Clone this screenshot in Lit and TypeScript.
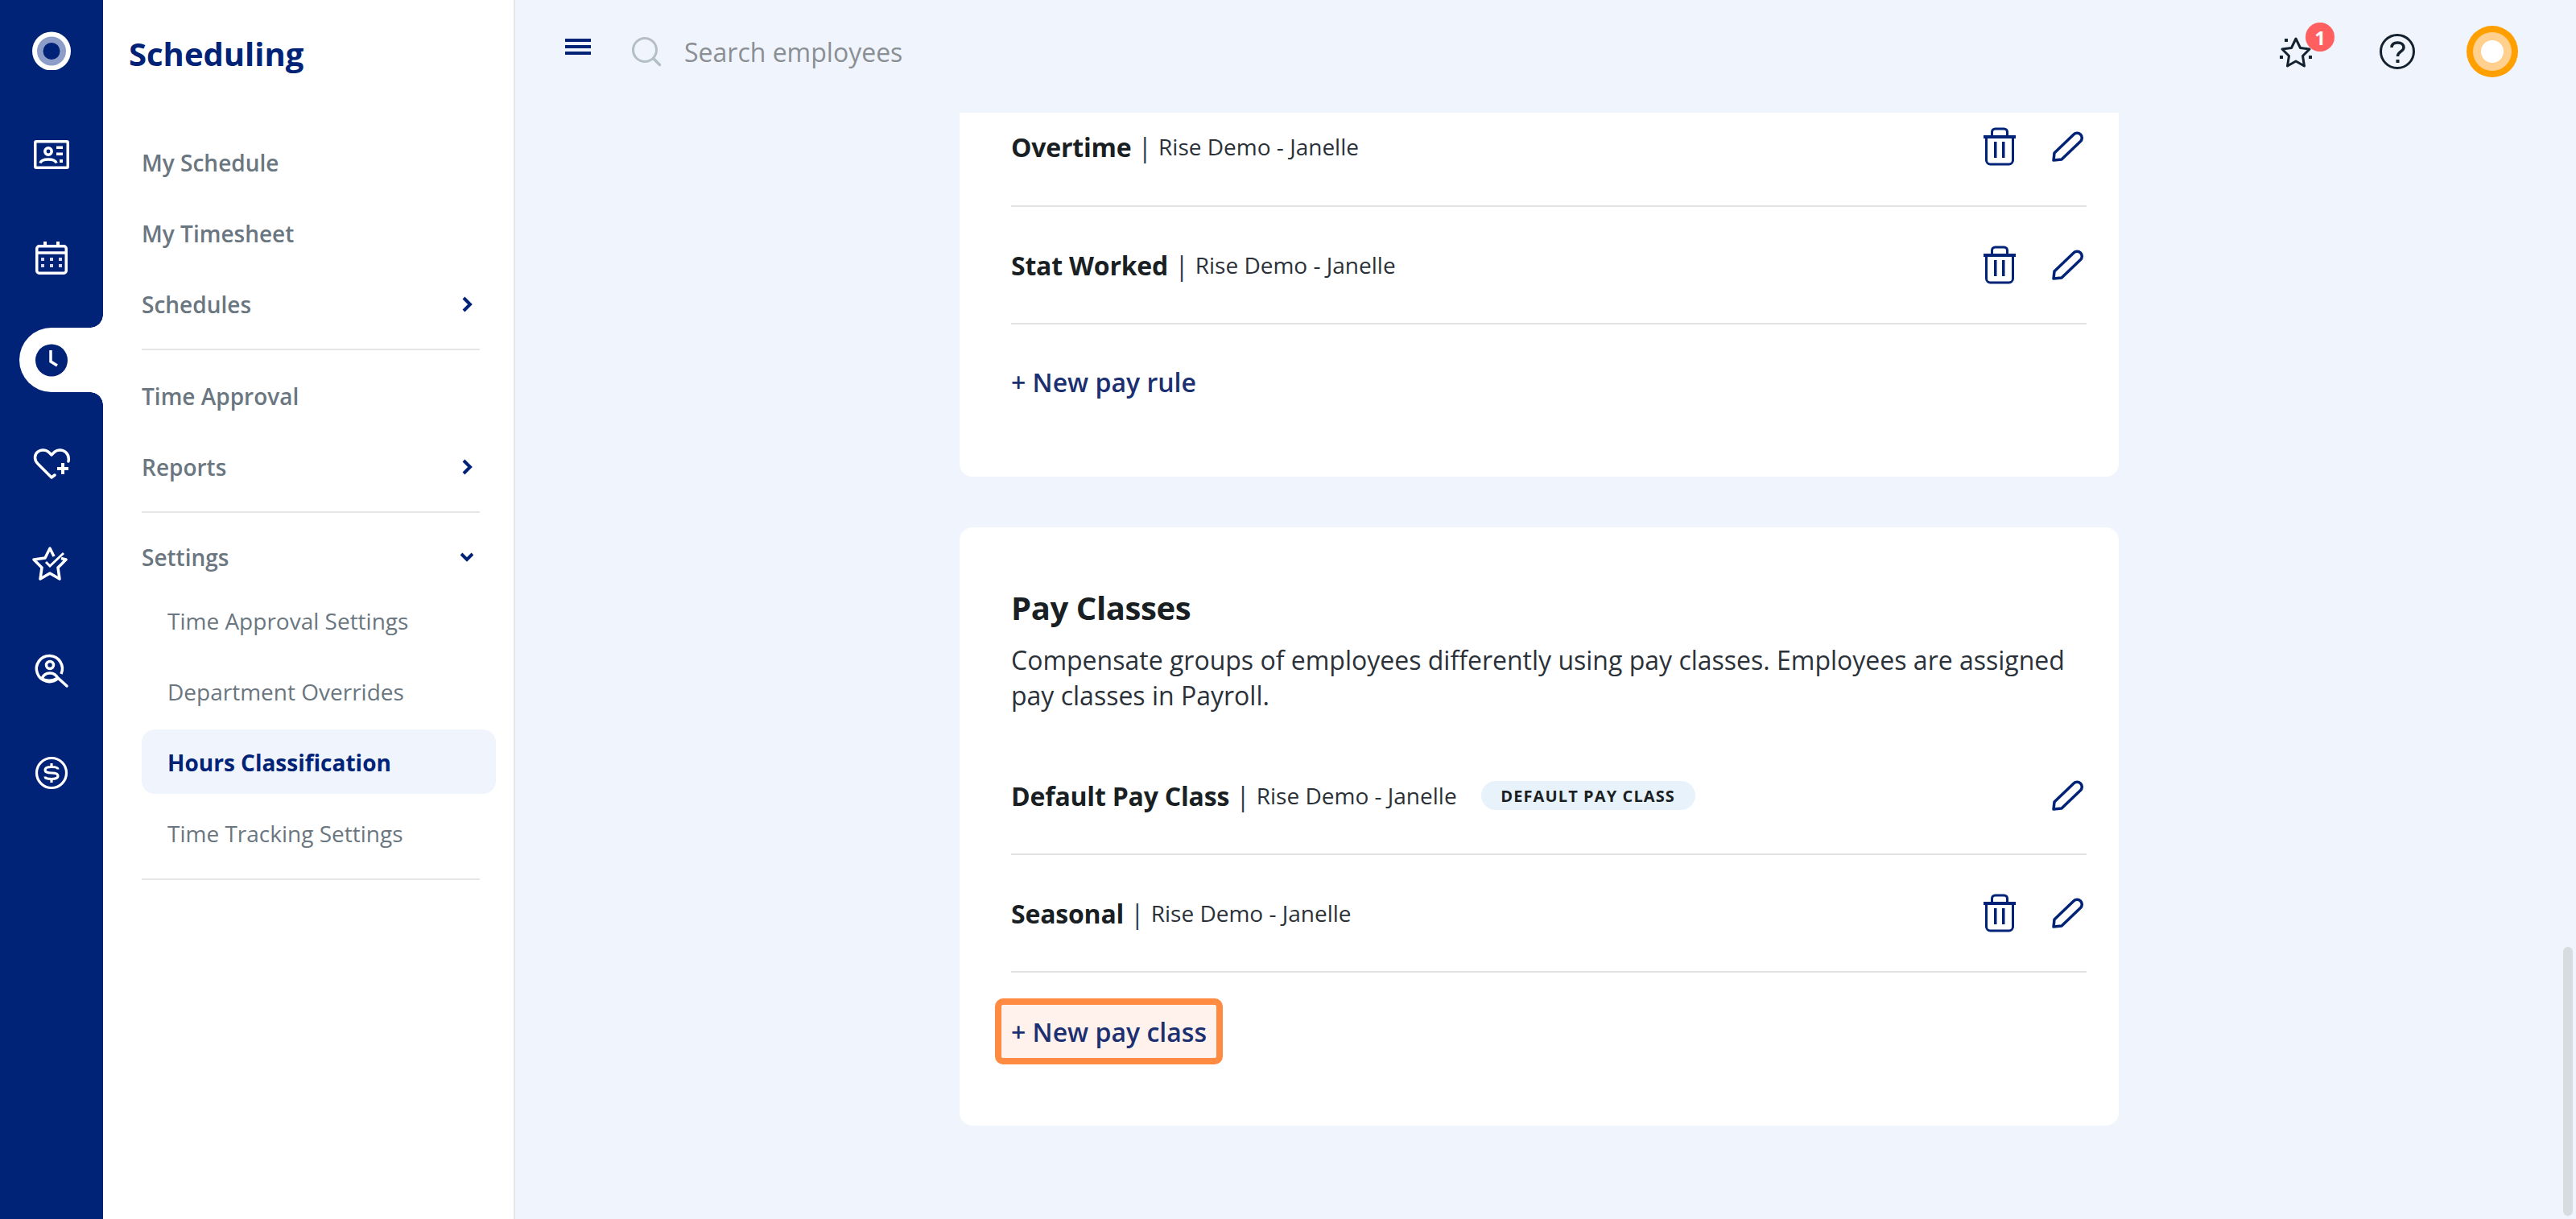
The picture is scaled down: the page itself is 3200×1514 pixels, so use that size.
import { LitElement, html, css, svg } from "lit";
import { customElement } from "lit/decorators.js";

const railIcons = [
  svg`<circle cx="24" cy="24.500" r="24" fill="#fff"/><circle cx="24" cy="24.500" r="18" fill="#8c9dc8"/><circle cx="24" cy="24.500" r="10.500" fill="#002377"/>`,
  svg`<g fill="none" stroke="#fff" stroke-width="3.500"><rect x="3.750" y="8.750" width="40.500" height="32.500" rx="1.500"/><circle cx="20" cy="21" r="4.200"/><path d="M10 35.500c1-3.500 5-4.500 10-4.500s9 1 10 4.500"/></g><path d="M30 14.500h8v3.500h-8zM30 22.500h8v3.500h-8zM34 31h4v4h-4z" fill="#fff"/>`,
  svg`<g fill="none" stroke="#fff" stroke-width="3.500"><rect x="5.750" y="10.750" width="36.500" height="33.500" rx="3"/><path d="M6 19h36"/></g><path d="M14 5h4v5h-4zM30 5h4v5h-4z" fill="#fff"/><path d="M11 25h4v4h-4zM22 25h4v4h-4zM33 25h4v4h-4zM11 33h4v4h-4zM22 33h4v4h-4zM33 33h4v4h-4z" fill="#d3d9ea"/>`,
  svg`<circle cx="24" cy="24.500" r="20" fill="#002377"/><path d="M23 12v14l8 5" fill="none" stroke="#fff" stroke-width="3.500"/>`,
  svg`<path d="M28 39l-4 3L7 25C2 20 3 14 6 11c4-4 11-4 15 0l3 3 3-3c4-4 11-4 15 0 3 3 4 6 3 11" fill="none" stroke="#fff" stroke-width="3.500" stroke-linecap="round" stroke-linejoin="round"/><path d="M38 24v14M31 31h14" stroke="#fff" stroke-width="4"/>`,
  svg`<path d="M27 12 22 2l-6 12-14 2 10 10-2 14 12-7 12 7-2-14 10-10-6-1.500" fill="none" stroke="#fff" stroke-width="3.500" stroke-linejoin="round"/><path d="M17 19l5 5 17-16" fill="none" stroke="#fff" stroke-width="3"/>`,
  svg`<g fill="none" stroke="#fff" stroke-width="3.500"><path d="M32 35.500A16 16 0 1 1 36 30"/><circle cx="22" cy="19" r="4.500"/><path d="M12 36c2-5 6-7 10-7s8 2 10 7"/><path d="M12 36c4 3 14 3 20-1"/></g><path d="M32 35l11 10" fill="none" stroke="#fff" stroke-width="3.500" stroke-linecap="round"/>`,
  svg`<g fill="none" stroke="#fff" stroke-width="3.200"><circle cx="24" cy="25" r="18.500"/><path d="M32 20.500c0-2-3-3-8-3s-8 1.500-8 3.750 3 3.750 8 3.750 8 1.500 8 3.750-3 3.750-8 3.750-8-1-8-3M24 13v4.500M24 32.500V37"/></g>`,
];

const trash = svg`<g fill="none" stroke="#002377" stroke-width="3"><path d="M10.500 10V6a4 4 0 0 1 4-4h11a4 4 0 0 1 4 4v4"/><path d="M3.500 14v27a5 5 0 0 0 5 5h23a5 5 0 0 0 5-5V14"/></g><path d="M0 10h40v4H0zM13 18h3.500v20H13zM23 18h3.500v20H23z" fill="#002377"/>`;
const pencil = svg`<path d="M3 37 4 28 28 5a6 6 0 0 1 8.500 8.500L13 36z" fill="none" stroke="#002377" stroke-width="3.500" stroke-linejoin="round"/>`;

@customElement("app-root")
export class AppRoot extends LitElement {
  static styles = css`
    :host { display: block; width: 3200px; height: 1514px; font-family: "Open Sans", "Noto Sans", sans-serif; background: #f0f4fc; }
    * { box-sizing: border-box; }
    .page { display: flex; height: 1514px; overflow: hidden; position: relative; }
    .rail { width: 128px; flex: none; background: #002377; display: flex; flex-direction: column; gap: 48px; padding-top: 23px; }
    .rail-item { height: 80px; display: flex; align-items: center; justify-content: center; position: relative; }
    .rail-item svg { width: 48px; height: 48px; }
    .rail-item.active { background: #fff; margin-left: 24px; border-radius: 40px 0 0 40px; padding-right: 24px; }
    .rail-item.active::before, .rail-item.active::after { content: ""; position: absolute; right: 0; width: 16px; height: 16px; }
    .rail-item.active::before { top: -16px; background: radial-gradient(circle at 0 0, transparent 15.500px, #fff 16px); }
    .rail-item.active::after { bottom: -16px; background: radial-gradient(circle at 0 100%, transparent 15.500px, #fff 16px); }
    .side { width: 512px; flex: none; background: #fff; border-right: 2px solid #e3e6ea; padding-left: 48px; }
    .title { height: 136px; display: flex; align-items: center; margin-left: -16px; color: #002377; font-size: 40px; font-weight: 700; padding-bottom: 4px; }
    .nav { width: 420px; padding-top: 22px; }
    .nav-item { height: 88px; display: flex; align-items: center; justify-content: space-between; padding-right: 8px; font-size: 28px; font-weight: 600; color: #6a7680; }
    .nav-item.settings { height: 80px; margin-top: 2px; padding-top: 3px; }
    .nav-item svg { width: 16px; height: 20px; }
    .divider { height: 2px; background: #e6e6e6; margin: 11px 0 13px; }
    .subs { display: flex; flex-direction: column; gap: 8px; width: 440px; }
    .sub { height: 80px; display: flex; align-items: center; padding-left: 32px; font-size: 28px; color: #6a7680; border-radius: 16px; padding-top: 2px; }
    .sub.active { background: #f0f4fc; color: #002377; font-weight: 700; }
    .subs + .divider { margin-top: 17px; }
    .main { flex: 1; display: flex; flex-direction: column; padding-right: 16px; min-width: 0; }
    .top { height: 140px; flex: none; display: flex; align-items: center; position: relative; padding: 0 56px 12px 62px; }
    .burger { width: 32px; height: 20px; margin-top: -12px; }
    .search { width: 38px; height: 38px; margin-left: 50px; }
    .ph { margin-left: 28px; font-size: 32px; color: #8a8f94; }
    .spacer { flex: 1; }
    .star { position: relative; width: 40px; height: 40px; margin-top: 2px; }
    .star svg { width: 40px; height: 40px; display: block; }
    .badge { position: absolute; left: 32px; top: -17px; width: 36px; height: 36px; border-radius: 50%; background: #ff5f5f; color: #fff; font-size: 24px; font-weight: 700; display: flex; align-items: center; justify-content: center; }
    .help { width: 46px; height: 46px; margin-left: 83px; }
    .avatar { width: 64px; height: 64px; margin-left: 63px; }
    .content { width: 1440px; margin: 0 auto; display: flex; flex-direction: column; gap: 63px; }
    .card { background: #fff; padding: 0 40px 0 64px; border-radius: 16px; }
    .card.first { border-radius: 0 0 16px 16px; height: 452px; }
    .card.second { padding-top: 64px; height: 743px; }
    .row { height: 144px; display: flex; align-items: center; color: #1f2429; }
    .row.clip { height: 115px; padding-bottom: 31px; }
    .sep { height: 2px; background: #e2e2e2; }
    .name { font-size: 32px; font-weight: 700; color: #1a1f24; letter-spacing: -0.2px; }
    .bar { font-size: 32px; margin: 0 8px; font-weight: 400; color: #2a3a50; }
    .org { font-size: 28px; color: #2b3138; }
    .tag { margin-left: 30px; height: 36px; width: 266px; border-radius: 18px; background: #e8f2fa; display: flex; align-items: center; justify-content: center; font-size: 20px; font-weight: 700; color: #1a1f24; letter-spacing: 1.100px; text-transform: uppercase; }
    .acts { margin-left: auto; margin-right: 4px; display: flex; align-items: center; gap: 44px; }
    .acts svg { display: block; }
    h2 { margin: 0; font-size: 40px; font-weight: 700; color: #1a1f24; line-height: 72px; letter-spacing: -0.4px; }
    p { margin: 7px 0 30px; font-size: 32px; line-height: 44px; color: #2b3138; width: 1320px; }
    .add { display: inline-flex; align-items: center; height: 82px; padding: 0 20px; margin: 32px 0 0 -20px; font-size: 32px; font-weight: 600; color: #1c2f70; white-space: pre; border-radius: 10px; }
    .add.near { margin-top: 30px; }
    .add.hl { border: 8px solid #ff8a42; background: #fff2ec; padding: 0 12px; }
    .thumb { position: absolute; right: 4px; top: 1176px; width: 12px; height: 334px; border-radius: 6px; background: #d8dbe0; }
  `;

  private row(name: string, opts: { clip?: boolean; tag?: boolean; del?: boolean } = {}) {
    return html`<div class="row ${opts.clip ? "clip" : ""}">
      <span class="name">${name}</span><span class="bar">|</span><span class="org">Rise Demo - Janelle</span>
      ${opts.tag ? html`<span class="tag">Default pay class</span>` : ""}
      <div class="acts">
        ${opts.del === false ? "" : html`<svg width="40" height="48" viewBox="0 0 40 48">${trash}</svg>`}
        <svg width="40" height="40" viewBox="0 0 40 40">${pencil}</svg>
      </div>
    </div><div class="sep"></div>`;
  }

  render() {
    const right = svg`<path d="M4 2l8 8-8 8" fill="none" stroke="#002377" stroke-width="4"/>`;
    const down = svg`<path d="M1 6l7 7 7-7" fill="none" stroke="#002377" stroke-width="4"/>`;
    return html`<div class="page">
      <nav class="rail">
        ${railIcons.map((i, n) => html`<div class="rail-item ${n === 3 ? "active" : ""}"><svg viewBox="0 0 48 48">${i}</svg></div>`)}
      </nav>
      <aside class="side">
        <div class="title">Scheduling</div>
        <div class="nav">
          <div class="nav-item">My Schedule</div>
          <div class="nav-item">My Timesheet</div>
          <div class="nav-item">Schedules<svg viewBox="0 0 16 20">${right}</svg></div>
          <div class="divider"></div>
          <div class="nav-item">Time Approval</div>
          <div class="nav-item">Reports<svg viewBox="0 0 16 20">${right}</svg></div>
          <div class="divider"></div>
          <div class="nav-item settings">Settings<svg viewBox="0 0 16 20">${down}</svg></div>
          <div class="subs">
            <div class="sub">Time Approval Settings</div>
            <div class="sub">Department Overrides</div>
            <div class="sub active">Hours Classification</div>
            <div class="sub">Time Tracking Settings</div>
          </div>
          <div class="divider"></div>
        </div>
      </aside>
      <main class="main">
        <header class="top">
          <svg class="burger" viewBox="0 0 32 20"><path d="M0 0h32v4H0zM0 8h32v4H0zM0 16h32v4H0z" fill="#002377"/></svg>
          <svg class="search" viewBox="0 0 38 38"><circle cx="17" cy="17" r="14.500" fill="none" stroke="#b4bec6" stroke-width="3"/><path d="M27.500 27.500l8 8" stroke="#b4bec6" stroke-width="3.500" stroke-linecap="round"/></svg>
          <span class="ph">Search employees</span>
          <span class="spacer"></span>
          <div class="star">
            <svg viewBox="0 0 40 40"><path d="M20 3l5.500 11.500L37 16l-8.500 8.500L30.500 37 20 31 9.500 37l2-12.500L3 16l11.500-1.500z" fill="none" stroke="#14212e" stroke-width="3" stroke-linejoin="round"/><path d="M6 3h4v4H6zM0 24h4v4H0zM36 24h4v4h-4z" fill="#14212e"/></svg>
            <span class="badge">1</span>
          </div>
          <svg class="help" viewBox="0 0 46 46"><circle cx="23" cy="23" r="20.500" fill="none" stroke="#14212e" stroke-width="3"/><path d="M16 18c0-4 3-6 7.500-6s7.500 2.500 7.500 6c0 5-7.500 5-7.500 11" fill="none" stroke="#14212e" stroke-width="3.500"/><rect x="21.500" y="33" width="4" height="4" fill="#14212e"/></svg>
          <svg class="avatar" viewBox="0 0 64 64"><circle cx="32" cy="32" r="32" fill="#ffa000"/><circle cx="32" cy="32" r="24" fill="#ffd08e"/><circle cx="32" cy="32" r="14" fill="#fff"/></svg>
        </header>
        <div class="content">
          <section class="card first">
            ${this.row("Overtime", { clip: true })}
            ${this.row("Stat Worked")}
            <div class="add near">+ New pay rule</div>
          </section>
          <section class="card second">
            <h2>Pay Classes</h2>
            <p>Compensate groups of employees differently using pay classes. Employees are assigned pay classes in Payroll.</p>
            ${this.row("Default Pay Class", { tag: true, del: false })}
            ${this.row("Seasonal")}
            <div class="add hl">+ New pay class</div>
          </section>
        </div>
      </main>
      <div class="thumb"></div>
    </div>`;
  }
}
